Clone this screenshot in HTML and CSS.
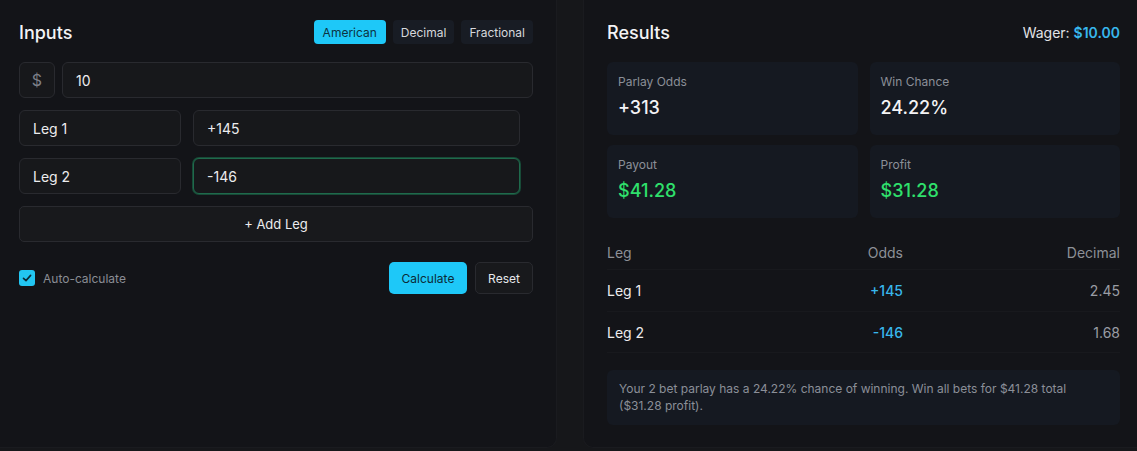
FILE: index.html
```html
<!DOCTYPE html>
<html lang="en">
<head>
<meta charset="utf-8">
<title>Parlay Calculator</title>
<link rel="stylesheet" href="styles.css">
</head>
<body>
<div class="layout">
  <section class="panel panel-left">
    <div class="panel-head">
      <h2 class="title">Inputs</h2>
      <div class="toggle">
        <button class="tg tg-active">American</button>
        <button class="tg">Decimal</button>
        <button class="tg">Fractional</button>
      </div>
    </div>
    <div class="wager-row">
      <span class="addon">$</span>
      <div class="field field-wide">10</div>
    </div>
    <div class="leg-row">
      <div class="field">Leg 1</div>
      <div class="field">+145</div>
    </div>
    <div class="leg-row">
      <div class="field">Leg 2</div>
      <div class="field field-focus">-146</div>
    </div>
    <button class="add-leg">+ Add Leg</button>
    <div class="actions">
      <label class="check">
        <span class="box">
          <svg width="12" height="12" viewBox="0 0 12 12"><path d="M2.5 6.3 L5 8.6 L9.6 3.4" fill="none" stroke="#0b2a36" stroke-width="1.6" stroke-linecap="round" stroke-linejoin="round"/></svg>
        </span>
        <span class="check-label">Auto-calculate</span>
      </label>
      <div class="btns">
        <button class="btn btn-primary">Calculate</button>
        <button class="btn btn-ghost">Reset</button>
      </div>
    </div>
  </section>
  <section class="panel panel-right">
    <div class="panel-head">
      <h2 class="title">Results</h2>
      <div class="wager">Wager: <span class="wager-val">$10.00</span></div>
    </div>
    <div class="cards">
      <div class="card"><div class="card-label">Parlay Odds</div><div class="card-val">+313</div></div>
      <div class="card"><div class="card-label">Win Chance</div><div class="card-val">24.22%</div></div>
      <div class="card"><div class="card-label">Payout</div><div class="card-val green">$41.28</div></div>
      <div class="card"><div class="card-label">Profit</div><div class="card-val green">$31.28</div></div>
    </div>
    <div class="table">
      <div class="tr th"><span>Leg</span><span class="r">Odds</span><span class="r">Decimal</span></div>
      <div class="tr"><span class="leg">Leg 1</span><span class="r odds">+145</span><span class="r dec">2.45</span></div>
      <div class="tr"><span class="leg">Leg 2</span><span class="r odds">-146</span><span class="r dec">1.68</span></div>
    </div>
    <div class="summary">Your 2 bet parlay has a 24.22% chance of winning. Win all bets for $41.28 total ($31.28 profit).</div>
  </section>
</div>
</body>
</html>
```
FILE: styles.css
```css
* { box-sizing: border-box; }
html, body { margin: 0; }
body {
  background: #16171a;
  font-family: Inter, "Noto Sans", sans-serif;
  color: #ececee;
  width: 1137px;
  height: 451px;
  overflow: hidden;
}
button { font-family: inherit; cursor: pointer; }
.layout {
  display: grid;
  grid-template-columns: 557px 1fr;
  column-gap: 26px;
  height: 448px;
}
.panel {
  background: #131418;
  border: 1px solid #1a1b1f;
  border-top: none;
}
.panel-left {
  border-left: none;
  border-radius: 0 0 10px 0;
  padding: 20px 23px 0 19px;
}
.panel-right {
  border-right: none;
  border-radius: 0 0 0 10px;
  padding: 20px 17px 0 23px;
}
.panel-head {
  display: flex;
  align-items: center;
  justify-content: space-between;
  height: 24px;
}
.title {
  margin: 0;
  font-size: 18px;
  font-weight: 500;
  color: #f3f3f5;
}
.toggle { display: flex; gap: 7px; }
.tg {
  height: 24px;
  padding: 0 9px;
  border: none;
  border-radius: 4px;
  background: #181c24;
  color: #d6d8dc;
  font-size: 12px;
}
.tg + .tg { padding: 0 8px; }
.tg-active { background: #1ec8f8; color: #0c3342; }
.wager-row {
  display: flex;
  gap: 7px;
  margin-top: 18px;
  height: 36px;
}
.addon {
  width: 36px;
  flex: none;
  display: flex;
  align-items: center;
  justify-content: center;
  border: 1px solid #292a2f;
  border-radius: 6px;
  background: #17181b;
  color: #7c7f87;
  font-size: 16px;
}
.field {
  height: 36px;
  display: flex;
  align-items: center;
  padding: 0 13px;
  border: 1px solid #292a2f;
  border-radius: 6px;
  background: #17181b;
  color: #ececee;
  font-size: 14px;
}
.field-wide { flex: 1; }
.leg-row {
  display: grid;
  grid-template-columns: 162px 1fr;
  gap: 12px;
  padding-right: 13px;
  margin-top: 12px;
}
.field-focus {
  border-color: #1f6a4c;
  box-shadow: 0 0 0 1px #184a37;
}
.add-leg {
  display: block;
  width: 100%;
  height: 36px;
  margin-top: 12px;
  border: 1px solid #292a2f;
  border-radius: 5px;
  background: #18191c;
  color: #ececee;
  font-size: 13px;
}
.actions {
  display: flex;
  align-items: center;
  justify-content: space-between;
  margin-top: 20px;
}
.check { display: flex; align-items: center; gap: 8px; }
.box {
  width: 16px;
  height: 16px;
  border-radius: 3px;
  background: #22c6f2;
  display: flex;
  align-items: center;
  justify-content: center;
}
.check-label { font-size: 12px; color: #8a8d94; }
.btns { display: flex; gap: 8px; }
.btn {
  height: 32px;
  border-radius: 5px;
  font-size: 12px;
  padding: 0;
}
.btn-primary {
  width: 78px;
  border: none;
  background: #1ec8f8;
  color: #0b2b37;
}
.btn-ghost {
  width: 58px;
  border: 1px solid #292a2f;
  background: #18191c;
  color: #e6e7ea;
}
.wager { font-size: 14px; color: #e2e3e6; }
.wager-val { color: #38b7ec; font-weight: 600; }
.cards {
  display: grid;
  grid-template-columns: 1fr 1fr;
  gap: 10px 12px;
  margin-top: 18px;
}
.card {
  height: 73px;
  background: #151921;
  border-radius: 6px;
  padding: 12px 12px 0 11px;
}
.card-label { font-size: 12px; line-height: 16px; color: #8b8f98; }
.card-val {
  margin-top: 6px;
  font-size: 18px;
  line-height: 24px;
  font-weight: 500;
  color: #f3f3f5;
}
.green { color: #2fe06c; }
.table { margin-top: 18px; }
.tr {
  display: grid;
  grid-template-columns: 1fr 100px 217px;
  align-items: center;
  height: 42px;
  border-bottom: 1px solid #18191d;
  font-size: 14px;
}
.th { height: 34px; color: #8d9097; }
.r { text-align: right; }
.leg { color: #ececee; }
.odds { color: #38b7ec; font-weight: 500; }
.dec { color: #9a9da4; }
.tr:last-child { height: 41px; }
.summary {
  margin-top: 17px;
  background: #151921;
  border-radius: 6px;
  padding: 10px 12px 11px 12px;
  font-size: 12px;
  line-height: 17px;
  color: #8b8f98;
}
```
